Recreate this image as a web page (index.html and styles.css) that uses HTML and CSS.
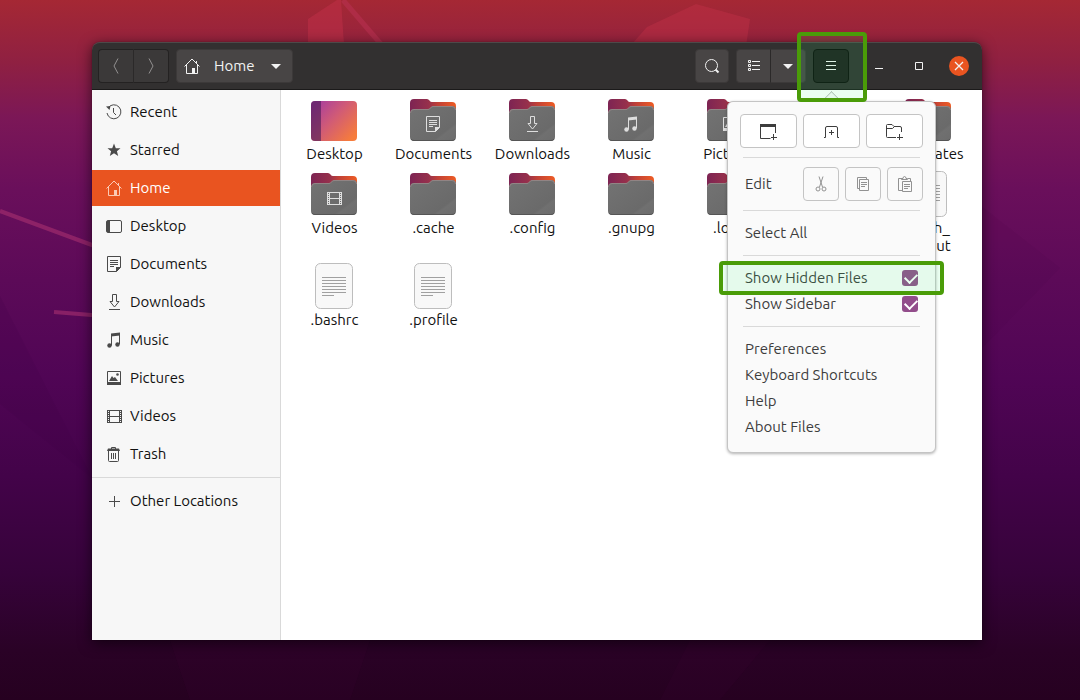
FILE: index.html
```html
<!DOCTYPE html>
<html lang="en">
<head>
    <meta charset="UTF-8">
    <meta name="viewport" content="width=device-width, initial-scale=1">
    <title>Home</title>
    <link rel="stylesheet" href="styles.css">
</head>
<body>

<!-- icons -->
<svg class="sprite" aria-hidden="true">
    <defs>
        <linearGradient id="folder-back" x1="0" y1="0" x2="1" y2="0">
            <stop offset="0" stop-color="#7d2453"/>
            <stop offset="0.4" stop-color="#96304c"/>
            <stop offset="0.6" stop-color="#bf4038"/>
            <stop offset="1" stop-color="#ee5c24"/>
        </linearGradient>
        <linearGradient id="folder-front" x1="0" y1="0" x2="1" y2="1">
            <stop offset="0" stop-color="#737373"/>
            <stop offset="0.74" stop-color="#6a6a6a"/>
            <stop offset="0.78" stop-color="#707070"/>
            <stop offset="1" stop-color="#6c6c6c"/>
        </linearGradient>
        <linearGradient id="desktop-bg" x1="0" y1="0" x2="1" y2="0.8">
            <stop offset="0.1" stop-color="#a93f9d"/>
            <stop offset="0.5" stop-color="#d05a77"/>
            <stop offset="1" stop-color="#f67c3c"/>
        </linearGradient>
    </defs>

    <symbol id="i-recent" viewBox="0 0 16 16">
        <path d="M2 4A7 7 0 1 1 1 9" fill="none" stroke="currentColor"/>
        <path d="M0 2.500 4.500 2 3.500 6z" fill="currentColor"/>
        <path d="M7.500 4v4.500l2.500 2.500" fill="none" stroke="currentColor"/>
    </symbol>
    <symbol id="i-star" viewBox="0 0 16 16">
        <path d="M8 1.500 9.800 6.200H14.500L10.900 9.200 12.200 14 8 11.200 3.800 14 5.100 9.200 1.500 6.200H6.200z" fill="currentColor"/>
    </symbol>
    <symbol id="i-home" viewBox="0 0 16 16">
        <path d="M.5 8.500 8 1l7.500 7.500M2.500 7v8.500h11V7M12.500 5V3" fill="none" stroke="currentColor"/>
        <path d="M8 10h3v5.500H8z" fill="currentColor"/>
    </symbol>
    <symbol id="i-desktop" viewBox="0 0 16 16">
        <rect x=".5" y="2.500" width="15" height="12" rx="1.500" fill="none" stroke="currentColor"/>
        <path d="M1 3h3v11H1z" fill="currentColor"/>
    </symbol>
    <symbol id="i-document" viewBox="0 0 16 16">
        <path d="M1.500.5h13v11l-4 4h-9zM4 4.500h8M4 6.500h8M4 8.500h8M4 10.500h4" fill="none" stroke="currentColor"/>
        <path d="M10 11h5l-5 5z" fill="currentColor"/>
    </symbol>
    <symbol id="i-download" viewBox="0 0 16 16">
        <path d="M6.500.5h4v7h2.500L8.500 13 4 7.500h2.500zM3 15.500h11" fill="none" stroke="currentColor"/>
    </symbol>
    <symbol id="i-music" viewBox="0 0 16 16">
        <path d="M5 1.500 14 .5v3L5 4.500z" fill="currentColor"/>
        <path d="M5.500 3v10.500M13.500 2v10" fill="none" stroke="currentColor"/>
        <circle cx="3.500" cy="13.500" r="2.200" fill="currentColor"/>
        <circle cx="11.500" cy="12.500" r="2.200" fill="currentColor"/>
    </symbol>
    <symbol id="i-picture" viewBox="0 0 16 16">
        <path d="M1.500 1.500h13v13h-13z" fill="none" stroke="currentColor"/>
        <path d="M1 12h14v3H1zM3 11 6 6l1.500 2L9 7l3 4z" fill="currentColor"/>
        <circle cx="11.500" cy="4.500" r="1.300" fill="currentColor"/>
    </symbol>
    <symbol id="i-video" viewBox="0 0 16 16">
        <path d="M3.500 2v13M13.500 2v13M3 2.500h11M3 8.500h11M3 14.500h11" fill="none" stroke="currentColor"/>
        <path d="M2 2v13M15 2v13" fill="none" stroke="currentColor" stroke-dasharray="1 1" stroke-width="2"/>
        <path d="M1.500 2v13M15.500 2v13" fill="none" stroke="currentColor"/>
    </symbol>
    <symbol id="i-trash" viewBox="0 0 16 16">
        <path d="M2.500 5v9.500q0 1 1 1h8q1 0 1-1V5M5.500 7v6M7.500 7v6M9.500 7v6M5.500 3V1.500h4V3" fill="none" stroke="currentColor"/>
        <path d="M1 5l1-2.500h11L14 5z" fill="currentColor"/>
    </symbol>
    <symbol id="i-plus" viewBox="0 0 16 16">
        <path d="M8.500 3v11M3 8.500h11" fill="none" stroke="currentColor"/>
    </symbol>

    <symbol id="i-back" viewBox="0 0 16 16">
        <path d="M10 .5 6 8l4 7.500" fill="none" stroke="currentColor"/>
    </symbol>
    <symbol id="i-forward" viewBox="0 0 16 16">
        <path d="M6 .5 10 8l-4 7.500" fill="none" stroke="currentColor"/>
    </symbol>
    <symbol id="i-down" viewBox="0 0 16 16">
        <path d="M3 6h10l-5 5z" fill="currentColor"/>
    </symbol>
    <symbol id="i-search" viewBox="0 0 16 16">
        <circle cx="7.500" cy="7.500" r="6" fill="none" stroke="currentColor"/>
        <path d="M11.500 11.500 14.500 14.500" stroke="currentColor" stroke-width="2"/>
    </symbol>
    <symbol id="i-list" viewBox="0 0 16 16">
        <path d="M2.500 2.500h2v2h-2zM2.500 6.500h2v2h-2zM2.500 10.500h2v2h-2zM6 3.500h8M6 7.500h8M6 11.500h8" fill="none" stroke="currentColor"/>
    </symbol>
    <symbol id="i-menu" viewBox="0 0 16 16">
        <path d="M3 3.500h10M3 7.500h10M3 11.500h10" fill="none" stroke="currentColor"/>
    </symbol>
    <symbol id="i-minimize" viewBox="0 0 16 16">
        <path d="M4 10.500h8" stroke="currentColor"/>
    </symbol>
    <symbol id="i-maximize" viewBox="0 0 16 16">
        <path d="M4.500 4.500h7v7h-7z" fill="none" stroke="currentColor"/>
    </symbol>
    <symbol id="i-close" viewBox="0 0 16 16">
        <path d="M4 4l8 8M12 4l-8 8" stroke="currentColor" stroke-width="1.300"/>
    </symbol>

    <symbol id="i-window-new" viewBox="0 0 17 18">
        <path d="M0 2h16v3H0z" fill="currentColor"/>
        <path d="M.5 5v11.500h10M15.500 5v6M13.500 12v6M11 15.500h6" fill="none" stroke="currentColor"/>
    </symbol>
    <symbol id="i-tab-new" viewBox="0 0 17 18">
        <path d="M1 15.500h1.500V6q0-1.500 1.500-1.500h9q1.500 0 1.500 1.500v9.500H16M8.500 8v5M6 10.500h5" fill="none" stroke="currentColor"/>
    </symbol>
    <symbol id="i-folder-new" viewBox="0 0 17 18">
        <path d="M10 15.500H1.500q-1 0-1-1v-11q0-1 1-1H6l2 2h6q1.500 0 1.500 1.500V10M.5 6.500h6l2-2M13.500 12v6M11 15.500h6" fill="none" stroke="currentColor"/>
    </symbol>
    <symbol id="i-cut" viewBox="0 0 16 16">
        <path d="M6 .5 9.500 11M10 .5 6.500 11" fill="none" stroke="currentColor"/>
        <circle cx="5" cy="13" r="2" fill="none" stroke="currentColor"/>
        <circle cx="11" cy="13" r="2" fill="none" stroke="currentColor"/>
    </symbol>
    <symbol id="i-copy" viewBox="0 0 16 16">
        <path d="M4.500 3.500h9v11h-9zM11.500 3V1.500h-9v11h2M6 6.500h6M6 8.500h6M6 10.500h4" fill="none" stroke="currentColor"/>
    </symbol>
    <symbol id="i-paste" viewBox="0 0 16 16">
        <path d="M5 14.500H1.500v-12H5M11 2.500h2.500V5M4.500 3.500V2.500h1.500q0-2 1.500-2t1.500 2h1.500v1zM5.500 5.500h9v10h-9zM7 8.500h6M7 10.500h6M7 12.500h4" fill="none" stroke="currentColor"/>
    </symbol>

    <symbol id="folder" viewBox="0 0 48 48">
        <path d="M1 20V7q0-4 4-4h13q1.500 0 2.500 1.500T23 6h20q4 0 4 4v10z" fill="url(#folder-back)"/>
        <path d="M1 18q0-5 4-5h14q1.500 0 2.500-1.500T24 10h19q4 0 4 4v27q0 4-4 4H5q-4 0-4-4z" fill="url(#folder-front)"/>
        <path d="M1.500 17q0-3.500 3.500-3.500h14q1.500 0 2.500-1.500t2.500-1.500h19q3.500 0 3.500 3.500" fill="none" stroke="#a08d8d" stroke-opacity=".7"/>
        <path d="M2 43q1 1.500 3 1.500h38q2 0 3-1.500" fill="none" stroke="#555"/>
    </symbol>
    <symbol id="desktop-folder" viewBox="0 0 48 48">
        <rect x="1" y="5" width="46" height="40" rx="4" fill="url(#desktop-bg)"/>
        <path d="M11 5H5Q1 5 1 9v32q0 4 4 4h6z" fill="#4a1a55" fill-opacity=".6"/>
    </symbol>
    <symbol id="text-file" viewBox="0 0 48 48">
        <rect x="5.500" y="1.500" width="37" height="45" rx="5" fill="#f8f8f8" stroke="#bdbdbd"/>
        <path d="M12 15.500h24M12 18.500h24M12 21.500h24M12 24.500h24M12 27.500h24M12 30.500h24M12 33.500h12" fill="none" stroke="#a0a0a0"/>
    </symbol>
</svg>

<svg class="wallpaper" viewBox="0 0 1080 700" preserveAspectRatio="none" aria-hidden="true">
    <path d="M308 19 337 0h4l4 60h-37z" fill="#c23048" fill-opacity=".5"/>
    <path d="M696 4 750 19 744 60H618l29-33z" fill="#c23048" fill-opacity=".45"/>
    <path d="M343 0 386 50" stroke="#b83050" stroke-width="5" stroke-opacity=".6"/>
    <path d="M0 211 100 248M54 312l50 4" stroke="#a83070" stroke-width="4" stroke-opacity=".6"/>
    <path d="M0 296 92 478 0 404z" fill="#3c0040" fill-opacity=".15"/>
    <path d="M980 205 1060 268 980 350z" fill="#3c0040" fill-opacity=".08"/>
    <path d="M170 640h200l-20 60H190z" fill="#6a0d50" fill-opacity=".06"/>
    <path d="M690 640h80l-50 60h-60z" fill="#6a0d50" fill-opacity=".06"/>
</svg>

<div class="window">
    <header class="headerbar">
        <div class="linked">
            <button class="tool dim" aria-label="Back"><svg class="icon"><use href="#i-back"/></svg></button>
            <button class="tool dim" aria-label="Forward"><svg class="icon"><use href="#i-forward"/></svg></button>
        </div>
        <button class="tool path">
            <svg class="icon"><use href="#i-home"/></svg>
            <span>Home</span>
            <svg class="icon"><use href="#i-down"/></svg>
        </button>

        <button class="tool search" aria-label="Search"><svg class="icon"><use href="#i-search"/></svg></button>
        <div class="linked">
            <button class="tool" aria-label="List view"><svg class="icon"><use href="#i-list"/></svg></button>
            <button class="tool" aria-label="View options"><svg class="icon"><use href="#i-down"/></svg></button>
        </div>

        <div class="menu-holder">
            <button class="tool active" aria-label="Menu"><svg class="icon"><use href="#i-menu"/></svg></button>
            <div class="highlight highlight-menu"></div>

            <div class="popover">
                <div class="new-row">
                    <button class="pop-btn" aria-label="New window"><svg class="icon-large"><use href="#i-window-new"/></svg></button>
                    <button class="pop-btn" aria-label="New tab"><svg class="icon-large"><use href="#i-tab-new"/></svg></button>
                    <button class="pop-btn" aria-label="New folder"><svg class="icon-large"><use href="#i-folder-new"/></svg></button>
                </div>
                <hr>
                <div class="edit-row">
                    <span>Edit</span>
                    <button class="pop-btn" aria-label="Cut" disabled><svg class="icon"><use href="#i-cut"/></svg></button>
                    <button class="pop-btn" aria-label="Copy" disabled><svg class="icon"><use href="#i-copy"/></svg></button>
                    <button class="pop-btn" aria-label="Paste" disabled><svg class="icon"><use href="#i-paste"/></svg></button>
                </div>
                <hr>
                <button class="item">Select All</button>
                <hr>
                <div class="item">
                    <label for="show-hidden">Show Hidden Files</label>
                    <input type="checkbox" id="show-hidden" checked>
                    <div class="highlight highlight-item"></div>
                </div>
                <div class="item">
                    <label for="show-sidebar">Show Sidebar</label>
                    <input type="checkbox" id="show-sidebar" checked>
                </div>
                <hr>
                <button class="item">Preferences</button>
                <button class="item">Keyboard Shortcuts</button>
                <button class="item">Help</button>
                <button class="item">About Files</button>
            </div>
        </div>

        <div class="window-controls">
            <button aria-label="Minimize"><svg class="icon"><use href="#i-minimize"/></svg></button>
            <button aria-label="Maximize"><svg class="icon"><use href="#i-maximize"/></svg></button>
            <button aria-label="Close"><span class="close"><svg class="icon"><use href="#i-close"/></svg></span></button>
        </div>
    </header>

    <div class="content">
        <nav class="sidebar">
            <a href="#"><svg class="icon"><use href="#i-recent"/></svg>Recent</a>
            <a href="#"><svg class="icon"><use href="#i-star"/></svg>Starred</a>
            <a href="#" class="selected"><svg class="icon"><use href="#i-home"/></svg>Home</a>
            <a href="#"><svg class="icon"><use href="#i-desktop"/></svg>Desktop</a>
            <a href="#"><svg class="icon"><use href="#i-document"/></svg>Documents</a>
            <a href="#"><svg class="icon"><use href="#i-download"/></svg>Downloads</a>
            <a href="#"><svg class="icon"><use href="#i-music"/></svg>Music</a>
            <a href="#"><svg class="icon"><use href="#i-picture"/></svg>Pictures</a>
            <a href="#"><svg class="icon"><use href="#i-video"/></svg>Videos</a>
            <a href="#"><svg class="icon"><use href="#i-trash"/></svg>Trash</a>
            <hr>
            <a href="#"><svg class="icon"><use href="#i-plus"/></svg>Other Locations</a>
        </nav>

        <main class="files">
            <div class="file">
                <svg viewBox="0 0 48 48"><use href="#desktop-folder"/></svg>
                <span>Desktop</span>
            </div>
            <div class="file">
                <svg viewBox="0 0 48 48"><use href="#folder"/><use href="#i-document" x="16" y="20" width="16" height="16"/></svg>
                <span>Documents</span>
            </div>
            <div class="file">
                <svg viewBox="0 0 48 48"><use href="#folder"/><use href="#i-download" x="16" y="20" width="16" height="16"/></svg>
                <span>Downloads</span>
            </div>
            <div class="file">
                <svg viewBox="0 0 48 48"><use href="#folder"/><use href="#i-music" x="16" y="20" width="16" height="16"/></svg>
                <span>Music</span>
            </div>
            <div class="file">
                <svg viewBox="0 0 48 48"><use href="#folder"/><use href="#i-picture" x="16" y="20" width="16" height="16"/></svg>
                <span>Pictures</span>
            </div>
            <div class="file">
                <svg viewBox="0 0 48 48"><use href="#folder"/></svg>
                <span>Public</span>
            </div>
            <div class="file">
                <svg viewBox="0 0 48 48"><use href="#folder"/></svg>
                <span>Templates</span>
            </div>
            <div class="file">
                <svg viewBox="0 0 48 48"><use href="#folder"/><use href="#i-video" x="16" y="20" width="16" height="16"/></svg>
                <span>Videos</span>
            </div>
            <div class="file">
                <svg viewBox="0 0 48 48"><use href="#folder"/></svg>
                <span>.cache</span>
            </div>
            <div class="file">
                <svg viewBox="0 0 48 48"><use href="#folder"/></svg>
                <span>.config</span>
            </div>
            <div class="file">
                <svg viewBox="0 0 48 48"><use href="#folder"/></svg>
                <span>.gnupg</span>
            </div>
            <div class="file">
                <svg viewBox="0 0 48 48"><use href="#folder"/></svg>
                <span>.local</span>
            </div>
            <div class="file">
                <svg viewBox="0 0 48 48"><use href="#folder"/></svg>
                <span>.ssh</span>
            </div>
            <div class="file">
                <svg viewBox="0 0 48 48"><use href="#text-file"/></svg>
                <span>.bash_<br>logout</span>
            </div>
            <div class="file">
                <svg viewBox="0 0 48 48"><use href="#text-file"/></svg>
                <span>.bashrc</span>
            </div>
            <div class="file">
                <svg viewBox="0 0 48 48"><use href="#text-file"/></svg>
                <span>.profile</span>
            </div>
        </main>
    </div>
</div>

</body>
</html>
```

FILE: styles.css
```css
* {
    box-sizing: border-box;
}

body {
    margin: 0;
    min-height: 100vh;
    padding: 42px 98px 60px 92px;
    display: flex;
    font-family: Ubuntu, "Noto Sans", sans-serif;
    font-size: 15px;
    line-height: 18px;
    color: #111;
    background: linear-gradient(#a52834 0%, #8f2042 9%, #7b1757 17%, #6a0f5b 27%, #5c0a58 40%, #500555 54%, #430349 68%, #36033a 82%, #2a0226 93%, #260120 100%);
}

button {
    font: inherit;
    color: inherit;
    margin: 0;
    padding: 0;
    border: none;
    background: none;
    cursor: pointer;
}

hr {
    margin: 0;
    border: none;
    border-top: 1px solid #d9d9d9;
}

.sprite {
    position: absolute;
    width: 0;
    height: 0;
}

.wallpaper {
    position: absolute;
    top: 0;
    left: 0;
    width: 100%;
    height: 100%;
    z-index: -1;
}

.icon {
    display: block;
    flex: none;
    width: 16px;
    height: 16px;
}

.icon-large {
    display: block;
    width: 17px;
    height: 18px;
}

.window {
    flex: 1;
    display: flex;
    flex-direction: column;
    border-radius: 8px 8px 0 0;
    box-shadow: 0 0 1px rgba(0, 0, 0, 0.5), 0 3px 14px rgba(0, 0, 0, 0.6);
}

/* header bar */
.headerbar {
    display: flex;
    align-items: center;
    gap: 7px;
    height: 48px;
    padding: 0 3px 0 6px;
    color: #f2f2f2;
    background: #323030;
    border-top: 1px solid #4d4949;
    border-bottom: 1px solid #1b1a1a;
    border-radius: 8px 8px 0 0;
}

.linked {
    display: flex;
}

.tool {
    display: flex;
    align-items: center;
    justify-content: center;
    width: 34px;
    height: 34px;
    background: #484545;
    border: 1px solid #3c3939;
    border-radius: 4px;
}

.linked .tool {
    width: 35px;
}

.linked .tool:first-child {
    border-right-color: #2b2929;
    border-radius: 4px 0 0 4px;
}

.linked .tool:last-child {
    border-left: none;
    border-radius: 0 4px 4px 0;
}

.tool.dim {
    color: #929090;
    background: #3b3939;
    border-color: #242222;
}

.linked .dim:first-child {
    width: 36px;
}

.tool.path {
    justify-content: flex-start;
    gap: 14px;
    width: 117px;
    padding-left: 7px;
}

.tool.search {
    margin-left: auto;
}

.tool.active {
    width: 36px;
    background: #1f1d1d;
    border-color: #0c0b0b;
}

.window-controls {
    display: flex;
    margin-left: 3px;
}

.window-controls button {
    display: flex;
    align-items: center;
    justify-content: center;
    width: 40px;
    height: 34px;
}

.close {
    display: flex;
    align-items: center;
    justify-content: center;
    width: 20px;
    height: 20px;
    border-radius: 50%;
    background: #e95420;
}

/* main area */
.content {
    flex: 1;
    display: flex;
    background: #fff;
}

.sidebar {
    flex: none;
    display: flex;
    flex-direction: column;
    gap: 2px;
    width: 189px;
    padding-top: 4px;
    background: #f7f7f7;
    border-right: 1px solid #d9d9d9;
}

.sidebar a {
    display: flex;
    align-items: center;
    gap: 8px;
    height: 36px;
    padding-left: 14px;
    color: #111;
    text-decoration: none;
}

.sidebar a .icon {
    color: #4a4a4a;
}

.sidebar a.selected {
    color: #fff;
    background: #e95420;
}

.sidebar a.selected .icon {
    color: #fbc9b4;
}

.sidebar hr {
    margin: 3px 0;
}

.files {
    flex: 1;
    display: grid;
    grid-template-columns: repeat(auto-fill, 99px);
    align-content: start;
    row-gap: 7px;
    padding: 6px 4px;
}

.file {
    display: flex;
    flex-direction: column;
    align-items: center;
    gap: 1px;
    text-align: center;
}

.file svg {
    width: 48px;
    height: 48px;
    margin-right: 1px;
    color: #dedede;
}

/* popover menu */
.menu-holder {
    position: relative;
}

.popover {
    position: absolute;
    top: calc(100% + 18px);
    right: -87px;
    width: 209px;
    padding: 12px;
    color: #3d3d3d;
    background: #fafafa;
    border: 1px solid #c4c4c4;
    border-radius: 6px;
    box-shadow: 0 1px 3px rgba(0, 0, 0, 0.3);
}

.popover::before {
    content: "";
    position: absolute;
    top: -8px;
    left: 96px;
    width: 14px;
    height: 14px;
    background: #fafafa;
    border: 1px solid #b4b4b4;
    border-right: none;
    border-bottom: none;
    transform: rotate(45deg);
    clip-path: polygon(0 0, 100% 0, 0 100%);
}

.popover hr {
    margin: 9px 3px;
}

.new-row {
    display: grid;
    grid-template-columns: repeat(3, 1fr);
    gap: 6px;
}

.edit-row {
    display: flex;
    align-items: center;
    gap: 6px;
}

.edit-row span {
    flex: 1;
    padding-left: 5px;
}

.pop-btn {
    display: flex;
    align-items: center;
    justify-content: center;
    height: 34px;
    background: #fff;
    border: 1px solid #c4c4c4;
    border-radius: 4px;
}

.edit-row .pop-btn {
    width: 36px;
    color: #929292;
    background: #fafafa;
}

.item {
    position: relative;
    display: flex;
    align-items: center;
    justify-content: space-between;
    width: 100%;
    height: 26px;
    padding: 0 5px;
    text-align: left;
}

.item input {
    appearance: none;
    width: 16px;
    height: 16px;
    margin: 0;
    border-radius: 3px;
    background: #924d8b;
}

.item input:checked::before {
    content: "";
    display: block;
    width: 10px;
    height: 6px;
    margin: 3px 0 0 3px;
    border: solid #fff;
    border-width: 0 0 2px 2px;
    transform: rotate(-45deg);
}

/* green frames that point out the menu button and the option */
.highlight {
    position: absolute;
    z-index: 1;
    border: 4px solid #4a9c08;
    border-radius: 4px;
    background: rgba(50, 255, 120, 0.1);
    pointer-events: none;
}

.highlight-menu {
    top: -17px;
    right: -18px;
    bottom: -19px;
    left: -16px;
}

.highlight-item {
    top: -4px;
    right: -21px;
    bottom: -4px;
    left: -21px;
}
```
